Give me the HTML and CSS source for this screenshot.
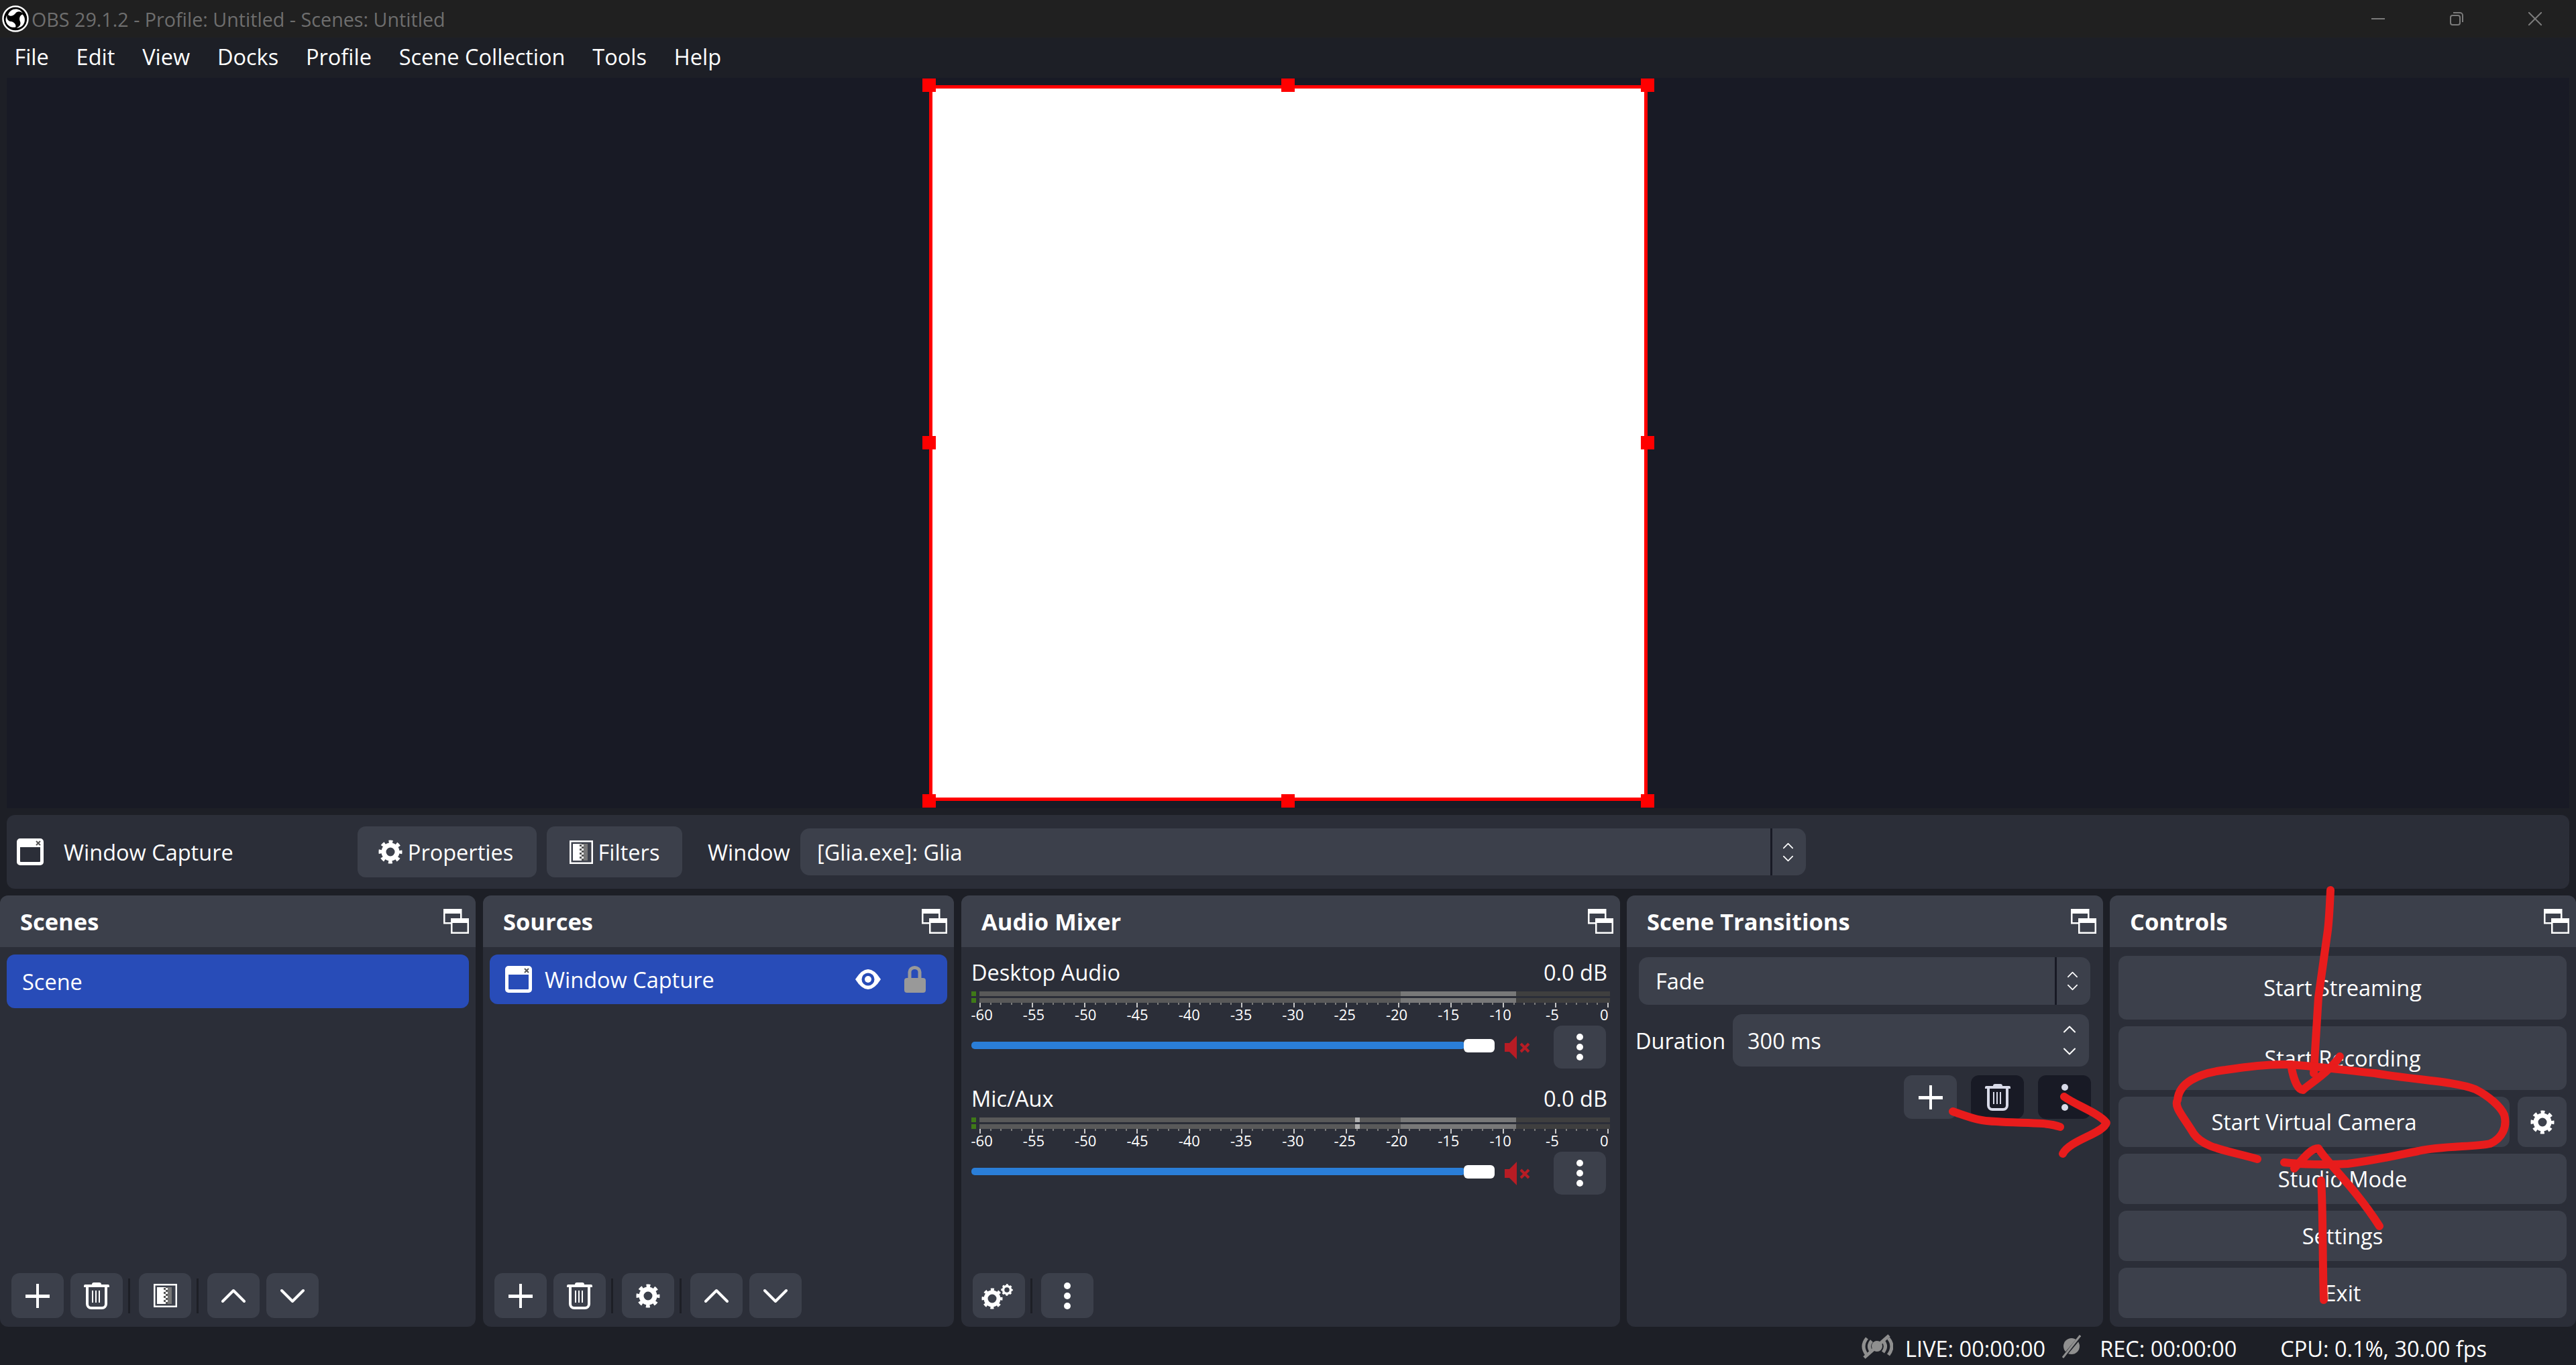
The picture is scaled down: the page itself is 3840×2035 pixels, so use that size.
FILE: index.html
```html
<!DOCTYPE html>
<html lang="en">
<head>
  <meta charset="UTF-8">
  <title>OBS 29.1.2 - Profile: Untitled - Scenes: Untitled</title>
  <link rel="stylesheet" href="styles.css">
</head>
<body>
  <!-- icon sprite -->
  <svg class="sprite" width="0" height="0">
    <defs>
      <pattern id="checker" width="6" height="6" patternUnits="userSpaceOnUse">
        <rect width="3" height="3" fill="#fff"/>
        <rect x="3" y="3" width="3" height="3" fill="#fff"/>
        <rect x="3" width="3" height="3" fill="#555"/>
        <rect y="3" width="3" height="3" fill="#555"/>
      </pattern>
    </defs>
    <symbol id="i-logo" viewBox="0 0 40 40">
      <circle cx="20" cy="20" r="18.5" fill="#000" stroke="#fff" stroke-width="2.5"/>
      <g fill="#fff">
        <path d="M9 14C12 4 26 2 31 12C27 8 22 9 20 12C17 16 12 17 9 14Z"/>
        <path d="M9 14C12 4 26 2 31 12C27 8 22 9 20 12C17 16 12 17 9 14Z" transform="rotate(120 20 20)"/>
        <path d="M9 14C12 4 26 2 31 12C27 8 22 9 20 12C17 16 12 17 9 14Z" transform="rotate(240 20 20)"/>
      </g>
    </symbol>
    <symbol id="i-float" viewBox="0 0 38 37">
      <g fill="none" stroke="#fff" stroke-width="2.5">
        <rect x="1.25" y="1.25" width="25" height="20"/>
        <rect x="12.25" y="15.25" width="24.5" height="20.5" fill="#3c404b"/>
      </g>
      <rect x="1" y="1" width="26" height="6" fill="#fff"/>
      <rect x="12" y="15" width="25" height="6" fill="#fff"/>
    </symbol>
    <symbol id="i-window" viewBox="0 0 40 40">
      <path fill="#fff" fill-rule="evenodd" d="M5 0H35a5 5 0 0 1 5 5V35a5 5 0 0 1-5 5H5a5 5 0 0 1-5-5V5a5 5 0 0 1 5-5ZM5 13V34a1 1 0 0 0 1 1H34a1 1 0 0 0 1-1V13Z"/>
      <path stroke="#555" stroke-width="2" d="M29 4l6 6M35 4l-6 6"/>
    </symbol>
    <symbol id="i-gear" viewBox="0 0 36 36">
      <circle cx="18" cy="18" r="10" fill="none" stroke="currentColor" stroke-width="7"/>
      <circle cx="18" cy="18" r="15" fill="none" stroke="currentColor" stroke-width="5" stroke-dasharray="5.8 5.98" stroke-dashoffset="2.9"/>
    </symbol>
    <symbol id="i-gears" viewBox="0 0 60 40">
      <circle cx="20" cy="24" r="9.5" fill="none" stroke="#fff" stroke-width="6"/>
      <circle cx="20" cy="24" r="13.5" fill="none" stroke="#fff" stroke-width="4" stroke-dasharray="5 5.6" stroke-dashoffset="2.5"/>
      <circle cx="42" cy="11" r="5.5" fill="none" stroke="#fff" stroke-width="3.5"/>
      <circle cx="42" cy="11" r="7.5" fill="none" stroke="#fff" stroke-width="2.5" stroke-dasharray="3 2.9" stroke-dashoffset="1.5"/>
    </symbol>
    <symbol id="i-filter" viewBox="0 0 35 35">
      <rect x="1.25" y="1.25" width="32.5" height="32.5" fill="none" stroke="#fff" stroke-width="2.5"/>
      <rect x="5" y="5" width="10" height="25" fill="#fff"/>
      <rect x="15" y="5" width="6" height="25" fill="url(#checker)"/>
      <rect x="21" y="5" width="6" height="25" fill="#777"/>
    </symbol>
    <symbol id="i-plus" viewBox="0 0 36 36">
      <rect y="16" width="36" height="5" fill="#fff"/>
      <rect x="16" width="4" height="36" fill="#fff"/>
    </symbol>
    <symbol id="i-trash" viewBox="0 0 38 40">
      <path fill="currentColor" d="M12 3q0-3 3-3h8q3 0 3 3h10q2 0 2 2v2H0V5q0-2 2-2Z"/>
      <path fill="none" stroke="currentColor" stroke-width="4" d="M5 7V32a6 6 0 0 0 6 6H27a6 6 0 0 0 6-6V7"/>
      <path stroke="currentColor" stroke-width="2" d="M13 12V30M18 12V30M23 12V30"/>
    </symbol>
    <symbol id="i-up" viewBox="0 0 36 22">
      <path fill="none" stroke="currentColor" stroke-width="4" stroke-linecap="round" stroke-linejoin="round" d="M2 19L18 3L34 19"/>
    </symbol>
    <symbol id="i-down" viewBox="0 0 36 22">
      <path fill="none" stroke="currentColor" stroke-width="4" stroke-linecap="round" stroke-linejoin="round" d="M2 3L18 19L34 3"/>
    </symbol>
    <symbol id="i-dots" viewBox="0 0 10 40">
      <circle cx="5" cy="5" r="5" fill="currentColor"/>
      <circle cx="5" cy="20" r="5" fill="currentColor"/>
      <circle cx="5" cy="35" r="5" fill="currentColor"/>
    </symbol>
    <symbol id="i-eye" viewBox="0 0 38 30">
      <path fill="#fff" d="M0 15Q19-15 38 15Q19 45 0 15Z"/>
      <circle cx="19" cy="15" r="9.5" fill="#284cb8"/>
      <circle cx="19" cy="15" r="5" fill="#fff"/>
    </symbol>
    <symbol id="i-lock" viewBox="0 0 32 40">
      <rect y="18" width="32" height="22" rx="4" fill="#999"/>
      <path fill="none" stroke="#999" stroke-width="5" d="M8 20V9a7.5 6.5 0 0 1 15 0V19"/>
    </symbol>
    <symbol id="i-mute" viewBox="0 0 38 35">
      <path fill="#b81c24" d="M0 11H7L18 0V35L7 24H0Z"/>
      <path stroke="#b81c24" stroke-width="4" d="M24 12L36 24M36 12L24 24"/>
    </symbol>
    <symbol id="i-live" viewBox="0 0 48 37">
      <g fill="none" stroke="#8f8f8f" stroke-width="5">
        <path d="M9 6Q-1 18 9 31M41 6Q51 18 41 31M16 10Q9 18 16 27M33 10Q40 18 33 27"/>
        <path d="M5 35L42 2"/>
      </g>
      <circle cx="24" cy="18" r="8" fill="#8f8f8f"/>
    </symbol>
    <symbol id="i-rec" viewBox="0 0 28 37">
      <circle cx="14" cy="18" r="12" fill="#8f8f8f"/>
      <path stroke="#1d1f26" stroke-width="5" d="M1 35L27 4"/>
      <path stroke="#8f8f8f" stroke-width="3" d="M1 35L27 2"/>
    </symbol>
  </svg>

  <header class="titlebar">
    <svg class="app-logo"><use href="#i-logo"/></svg>
    <span class="app-title">OBS 29.1.2 - Profile: Untitled - Scenes: Untitled</span>
    <div class="win-btns">
      <svg viewBox="0 0 20 20" class="win-btn"><path d="M0 10H20"/></svg>
      <svg viewBox="0 0 20 20" class="win-btn"><rect x="1" y="5" width="14" height="14" rx="3"/><path d="M5 1H15a4 4 0 0 1 4 4V15"/></svg>
      <svg viewBox="0 0 20 20" class="win-btn"><path d="M0 0L20 20M20 0L0 20"/></svg>
    </div>
  </header>

  <nav class="menubar">
    <span>File</span><span>Edit</span><span>View</span><span>Docks</span><span>Profile</span><span>Scene Collection</span><span>Tools</span><span>Help</span>
  </nav>

  <main class="preview">
    <div class="source-box">
      <i class="handle h-tl"></i><i class="handle h-tc"></i><i class="handle h-tr"></i>
      <i class="handle h-ml"></i><i class="handle h-mr"></i>
      <i class="handle h-bl"></i><i class="handle h-bc"></i><i class="handle h-br"></i>
    </div>
  </main>

  <section class="toolbar">
    <svg class="icon-40"><use href="#i-window"/></svg>
    <span class="source-name">Window Capture</span>
    <button class="btn btn-props"><svg class="icon-36"><use href="#i-gear"/></svg>Properties</button>
    <button class="btn btn-filters"><svg class="icon-35"><use href="#i-filter"/></svg>Filters</button>
    <span class="window-label">Window</span>
    <div class="combo window-combo">
      <span class="combo-text">[Glia.exe]: Glia</span>
      <div class="combo-arrows">
        <svg class="arrow-s"><use href="#i-up"/></svg>
        <svg class="arrow-s"><use href="#i-down"/></svg>
      </div>
    </div>
  </section>

  <section class="docks">
    <div class="dock dock-scenes">
      <div class="dock-title"><span>Scenes</span><svg class="float"><use href="#i-float"/></svg></div>
      <div class="dock-body list-body">
        <div class="row scene-row">Scene</div>
      </div>
      <div class="tools">
        <button class="tool"><svg class="icon-36"><use href="#i-plus"/></svg></button>
        <button class="tool"><svg class="icon-trash"><use href="#i-trash"/></svg></button>
        <i class="tool-sep"></i>
        <button class="tool"><svg class="icon-35"><use href="#i-filter"/></svg></button>
        <i class="tool-sep"></i>
        <button class="tool"><svg class="icon-chev"><use href="#i-up"/></svg></button>
        <button class="tool"><svg class="icon-chev"><use href="#i-down"/></svg></button>
      </div>
    </div>

    <div class="dock dock-sources">
      <div class="dock-title"><span>Sources</span><svg class="float"><use href="#i-float"/></svg></div>
      <div class="dock-body list-body">
        <div class="row source-row">
          <svg class="icon-40 row-icon"><use href="#i-window"/></svg>
          <span>Window Capture</span>
          <svg class="eye"><use href="#i-eye"/></svg>
          <svg class="lock"><use href="#i-lock"/></svg>
        </div>
      </div>
      <div class="tools">
        <button class="tool"><svg class="icon-36"><use href="#i-plus"/></svg></button>
        <button class="tool"><svg class="icon-trash"><use href="#i-trash"/></svg></button>
        <i class="tool-sep"></i>
        <button class="tool"><svg class="icon-36"><use href="#i-gear"/></svg></button>
        <i class="tool-sep"></i>
        <button class="tool"><svg class="icon-chev"><use href="#i-up"/></svg></button>
        <button class="tool"><svg class="icon-chev"><use href="#i-down"/></svg></button>
      </div>
    </div>

    <div class="dock dock-mixer">
      <div class="dock-title"><span>Audio Mixer</span><svg class="float"><use href="#i-float"/></svg></div>
      <div class="dock-body mixer-body">
        <div class="strip">
          <div class="strip-head"><span>Desktop Audio</span><span>0.0 dB</span></div>
          <div class="meter">
            <div class="channel"><i class="sig"></i><div class="level"></div></div>
            <div class="channel"><i class="sig"></i><div class="level"></div></div>
          </div>
          <div class="scale"><span>-60</span><span>-55</span><span>-50</span><span>-45</span><span>-40</span><span>-35</span><span>-30</span><span>-25</span><span>-20</span><span>-15</span><span>-10</span><span>-5</span><span>0</span></div>
          <div class="strip-ctrl">
            <div class="slider"><div class="track"></div><i class="thumb"></i></div>
            <svg class="mute"><use href="#i-mute"/></svg>
            <button class="tool strip-menu"><svg class="icon-dots"><use href="#i-dots"/></svg></button>
          </div>
        </div>
        <div class="strip">
          <div class="strip-head"><span>Mic/Aux</span><span>0.0 dB</span></div>
          <div class="meter">
            <div class="channel"><i class="sig"></i><div class="level"><i class="peak"></i></div></div>
            <div class="channel"><i class="sig"></i><div class="level"><i class="peak"></i></div></div>
          </div>
          <div class="scale"><span>-60</span><span>-55</span><span>-50</span><span>-45</span><span>-40</span><span>-35</span><span>-30</span><span>-25</span><span>-20</span><span>-15</span><span>-10</span><span>-5</span><span>0</span></div>
          <div class="strip-ctrl">
            <div class="slider"><div class="track"></div><i class="thumb"></i></div>
            <svg class="mute"><use href="#i-mute"/></svg>
            <button class="tool strip-menu"><svg class="icon-dots"><use href="#i-dots"/></svg></button>
          </div>
        </div>
      </div>
      <div class="tools">
        <button class="tool"><svg class="icon-gears"><use href="#i-gears"/></svg></button>
        <i class="tool-sep"></i>
        <button class="tool"><svg class="icon-dots"><use href="#i-dots"/></svg></button>
      </div>
    </div>

    <div class="dock dock-trans">
      <div class="dock-title"><span>Scene Transitions</span><svg class="float"><use href="#i-float"/></svg></div>
      <div class="dock-body trans-body">
        <div class="combo fade-combo">
          <span class="combo-text">Fade</span>
          <div class="combo-arrows fade-arrows">
            <svg class="arrow-s"><use href="#i-up"/></svg>
            <svg class="arrow-s"><use href="#i-down"/></svg>
          </div>
        </div>
        <div class="duration">
          <span>Duration</span>
          <div class="spin">
            <span>300 ms</span>
            <div class="spin-arrows">
              <svg class="arrow-m"><use href="#i-up"/></svg>
              <svg class="arrow-m"><use href="#i-down"/></svg>
            </div>
          </div>
        </div>
        <div class="trans-tools">
          <button class="tool tool-sq"><svg class="icon-plus-s"><use href="#i-plus"/></svg></button>
          <button class="tool tool-sq tool-off"><svg class="icon-trash"><use href="#i-trash"/></svg></button>
          <button class="tool tool-sq tool-off"><svg class="icon-dots"><use href="#i-dots"/></svg></button>
        </div>
      </div>
    </div>

    <div class="dock dock-controls">
      <div class="dock-title"><span>Controls</span><svg class="float"><use href="#i-float"/></svg></div>
      <div class="dock-body controls-body">
        <button class="btn ctl ctl-big">Start Streaming</button>
        <button class="btn ctl ctl-big">Start Recording</button>
        <div class="ctl-row">
          <button class="btn ctl vcam">Start Virtual Camera</button>
          <button class="btn ctl vcam-gear"><svg class="icon-36"><use href="#i-gear"/></svg></button>
        </div>
        <button class="btn ctl">Studio Mode</button>
        <button class="btn ctl">Settings</button>
        <button class="btn ctl">Exit</button>
      </div>
    </div>
  </section>

  <footer class="statusbar">
    <svg class="st-live"><use href="#i-live"/></svg>
    <span class="st-text">LIVE: 00:00:00</span>
    <svg class="st-rec"><use href="#i-rec"/></svg>
    <span class="st-text">REC: 00:00:00</span>
    <span class="st-text st-cpu">CPU: 0.1%, 30.00 fps</span>
  </footer>

  <!-- hand drawn red marks on top of the screenshot -->
  <svg class="scribble" viewBox="0 0 3840 2035">
    <path d="M3474 1327C3473 1350 3472 1370 3470 1387L3456 1487L3449 1600"/>
    <path d="M3415 1587C3418 1605 3424 1625 3433 1625C3444 1615 3470 1600 3488 1575"/>
    <path d="M3365 1728C3320 1715 3285 1712 3270 1690C3255 1665 3240 1650 3246 1640C3248 1615 3275 1600 3318 1595C3350 1590 3380 1586 3410 1587C3460 1590 3490 1595 3540 1600C3600 1610 3660 1612 3690 1624C3710 1634 3728 1650 3733 1662C3738 1680 3730 1697 3712 1705C3690 1710 3640 1708 3605 1716C3575 1722 3540 1730 3500 1735C3470 1737 3430 1736 3405 1733"/>
    <path d="M3420 1742C3435 1725 3445 1712 3456 1712C3470 1735 3510 1770 3547 1828"/>
    <path d="M3460 1760C3463 1800 3462 1880 3464 1938"/>
    <path d="M2911 1657C2935 1665 2950 1672 2976 1672C3010 1675 3050 1672 3071 1680"/>
    <path d="M3077 1635C3095 1648 3130 1660 3140 1674C3135 1690 3085 1700 3075 1720"/>
  </svg>
</body>
</html>
```

FILE: styles.css
```css
* {
  box-sizing: border-box;
}

html, body {
  margin: 0;
  padding: 0;
}

body {
  position: relative;
  width: 3840px;
  height: 2035px;
  overflow: hidden;
  display: flex;
  flex-direction: column;
  background-color: #1d1f26;
  color: #ffffff;
  font-family: "Open Sans", "Liberation Sans", sans-serif;
  font-size: 32.5px;
}

button {
  font: inherit;
  color: inherit;
  border: 0;
  padding: 0;
}

svg {
  display: block;
  flex: none;
}

.sprite {
  position: absolute;
}

/* title bar */
.titlebar {
  height: 56px;
  flex: none;
  display: flex;
  align-items: center;
  background-color: #202020;
  padding-left: 3px;
}

.app-logo {
  width: 40px;
  height: 40px;
}

.app-title {
  margin-left: 4px;
  font-size: 28.7px;
  color: #6e6e6e;
}

.win-btns {
  margin-left: auto;
  margin-right: 51px;
  display: flex;
  gap: 97px;
}

.win-btn {
  width: 20px;
  height: 20px;
  fill: none;
  stroke: #7b7b7b;
  stroke-width: 2;
}

/* menu */
.menubar {
  height: 60px;
  flex: none;
  display: flex;
  align-items: center;
  padding: 0 0 4px 1px;
}

.menubar span {
  padding: 0 20.4px;
}

/* preview */
.preview {
  height: 1089px;
  flex: none;
  margin: 0 10px;
  background-color: #181a25;
  display: flex;
  align-items: center;
  justify-content: center;
}

.source-box {
  position: relative;
  width: 1071px;
  height: 1067px;
  background-color: #ffffff;
  border: 5px solid #ff0000;
}

.handle {
  position: absolute;
  width: 20px;
  height: 20px;
  background-color: #ff0000;
}

.h-tl { left: -15px; top: -15px; }
.h-tc { left: 520px; top: -15px; }
.h-tr { right: -15px; top: -15px; }
.h-ml { left: -15px; top: 518px; }
.h-mr { right: -15px; top: 518px; }
.h-bl { left: -15px; bottom: -15px; }
.h-bc { left: 520px; bottom: -15px; }
.h-br { right: -15px; bottom: -15px; }

/* source toolbar */
.toolbar {
  height: 110px;
  flex: none;
  margin: 10px 10px;
  padding-left: 15px;
  display: flex;
  align-items: center;
  background-color: #2b2e38;
  border-radius: 12px;
}

.icon-40 {
  width: 40px;
  height: 40px;
}

.icon-36 {
  width: 36px;
  height: 36px;
}

.icon-35 {
  width: 35px;
  height: 35px;
}

.source-name {
  width: 438px;
  margin-left: 30px;
}

.btn {
  display: flex;
  align-items: center;
  justify-content: center;
  background-color: #3c404b;
  border-radius: 12px;
}

.btn-props {
  width: 267px;
  height: 76px;
  gap: 8px;
  padding-right: 4px;
}

.btn-filters {
  width: 202px;
  height: 76px;
  margin-left: 15px;
  gap: 8px;
}

.window-label {
  width: 138px;
  margin-left: 38px;
}

.combo {
  display: flex;
  align-items: stretch;
  background-color: #3c404b;
  border-radius: 14px;
}

.combo-text {
  flex: 1;
  display: flex;
  align-items: center;
  padding-left: 25px;
  border-right: 3px solid #181a25;
}

.combo-arrows {
  width: 50px;
  display: flex;
  flex-direction: column;
  align-items: center;
  justify-content: center;
  gap: 9px;
  padding-right: 3px;
}

.arrow-s {
  width: 15px;
  height: 10px;
}

.arrow-m {
  width: 18px;
  height: 11px;
}

.window-combo {
  width: 1499px;
  height: 70px;
}

/* docks */
.docks {
  height: 643px;
  flex: none;
  display: flex;
}

.dock {
  display: flex;
  flex-direction: column;
  background-color: #2b2e38;
  border-radius: 12px;
  overflow: hidden;
}

.dock-scenes { width: 709px; }
.dock-sources { width: 702px; margin-left: 11px; }
.dock-mixer { width: 982px; margin-left: 11px; }
.dock-trans { width: 710px; margin-left: 10px; }
.dock-controls { width: 695px; margin-left: 10px; }

.dock-title {
  height: 77px;
  flex: none;
  display: flex;
  align-items: center;
  justify-content: space-between;
  padding: 0 10px 0 30px;
  background-color: #3c404b;
  font-size: 34.5px;
  font-weight: 700;
}

.float {
  width: 38px;
  height: 37px;
}

.dock-body {
  flex: 1;
  min-height: 0;
}

.list-body {
  padding: 11px 10px 0;
}

.row {
  display: flex;
  align-items: center;
  background-color: #284cb8;
  border-radius: 12px;
}

.scene-row {
  height: 80px;
  padding-left: 23px;
}

.source-row {
  height: 74px;
  padding: 0 32px 0 23px;
}

.row-icon {
  margin-right: 19px;
}

.eye {
  width: 38px;
  height: 30px;
  margin-left: auto;
}

.lock {
  width: 32px;
  height: 40px;
  margin-left: 35px;
}

/* small buttons under lists */
.tools {
  height: 67px;
  flex: none;
  margin-bottom: 13px;
  padding-left: 17px;
  display: flex;
  gap: 10px;
}

.tool {
  width: 78px;
  height: 67px;
  flex: none;
  display: flex;
  align-items: center;
  justify-content: center;
  background-color: #3c404b;
  border-radius: 12px;
  color: #ffffff;
}

.tool-sep {
  width: 3px;
  height: 52px;
  align-self: center;
  margin: 0 3px 0 -2px;
  background-color: #1d1f26;
}

.icon-trash {
  width: 38px;
  height: 40px;
}

.icon-chev {
  width: 36px;
  height: 22px;
}

.icon-dots {
  width: 10px;
  height: 40px;
}

.icon-gears {
  width: 60px;
  height: 40px;
}

.icon-plus-s {
  width: 36px;
  height: 36px;
}

/* audio mixer */
.mixer-body {
  padding: 18px 15px 0;
}

.strip {
  margin-bottom: 25px;
}

.strip-head {
  height: 42px;
  margin-bottom: 6px;
  display: flex;
  align-items: center;
  justify-content: space-between;
  padding: 0 4px 3px 0;
}

.meter {
  display: flex;
  flex-direction: column;
  gap: 3px;
}

.channel {
  height: 7px;
  display: flex;
}

.sig {
  width: 7px;
  margin-right: 5px;
  background-color: #3f7a18;
}

.level {
  position: relative;
  flex: 1;
  background: linear-gradient(to right, #595959 628px, #787878 628px, #787878 800px, #3f3f3f 800px);
}

.peak {
  position: absolute;
  left: 560px;
  top: 0;
  width: 7px;
  height: 100%;
  background-color: #b0b0b0;
}

.scale {
  height: 34px;
  display: flex;
  margin-left: -23px;
  font-size: 22px;
  line-height: 34px;
  background-image:
    repeating-linear-gradient(to right, #c8c8c8 0, #c8c8c8 2px, transparent 2px, transparent 78px),
    repeating-linear-gradient(to right, #7c7c7c 0, #7c7c7c 2px, transparent 2px, transparent 15.6px);
  background-position: 35px 0, 35px 0;
  background-repeat: no-repeat;
  background-size: 940px 7px, 940px 3px;
}

.scale span {
  width: 77.3px;
  flex: none;
  text-align: center;
}

.strip-ctrl {
  height: 64px;
  display: flex;
  align-items: center;
}

.slider {
  position: relative;
  width: 780px;
  height: 20px;
  margin-top: -4px;
}

.track {
  position: absolute;
  left: 0;
  top: 4px;
  width: 736px;
  height: 11px;
  background-color: #2a7ed8;
  border-radius: 5px;
}

.thumb {
  position: absolute;
  left: 734px;
  top: 0;
  width: 46px;
  height: 20px;
  background-color: #ffffff;
  border-radius: 6px;
}

.mute {
  width: 38px;
  height: 35px;
  margin-left: 15px;
}

.strip-menu {
  height: 64px;
  margin-left: auto;
  margin-right: 6px;
}

/* scene transitions */
.trans-body {
  padding: 15px 18px 0 13px;
}

.fade-combo {
  width: 673px;
  height: 71px;
  margin-left: 5px;
}

.duration {
  margin-top: 14px;
  display: flex;
  align-items: center;
  justify-content: space-between;
}

.spin {
  width: 531px;
  height: 78px;
  margin-right: 3px;
  display: flex;
  align-items: center;
  justify-content: space-between;
  padding: 0 20px 0 22px;
  background-color: #3c404b;
  border-radius: 14px;
}

.spin-arrows {
  display: flex;
  flex-direction: column;
  gap: 22px;
}

.trans-tools {
  margin-top: 13px;
  display: flex;
  justify-content: flex-end;
  gap: 21px;
}

.tool-sq {
  width: 79px;
  height: 65px;
}

.tool-off {
  background-color: #181a25;
  color: #d8dae8;
}

/* controls */
.controls-body {
  padding: 13px 14px 0 13px;
  display: flex;
  flex-direction: column;
  gap: 10px;
}

.ctl {
  height: 75px;
  flex: none;
}

.ctl-big {
  height: 95px;
}

.ctl-row {
  display: flex;
  gap: 12px;
}

.vcam {
  width: 583px;
}

.vcam-gear {
  flex: 1;
}

/* status bar */
.statusbar {
  flex: 1;
  display: flex;
  align-items: center;
  justify-content: flex-end;
  padding: 8px 133px 0 0;
}

.st-live {
  width: 48px;
  height: 37px;
  margin-top: -6px;
}

.st-text {
  margin-left: 18px;
}

.st-rec {
  width: 28px;
  height: 37px;
  margin-top: -6px;
  margin-left: 25px;
}

.st-rec + .st-text {
  margin-left: 28px;
}

.st-text.st-cpu {
  margin-left: 65px;
}

/* red pen */
.scribble {
  position: absolute;
  left: 0;
  top: 0;
  width: 3840px;
  height: 2035px;
  fill: none;
  stroke: #e81c1c;
  stroke-width: 12;
  stroke-linecap: round;
  stroke-linejoin: round;
  pointer-events: none;
}
```
